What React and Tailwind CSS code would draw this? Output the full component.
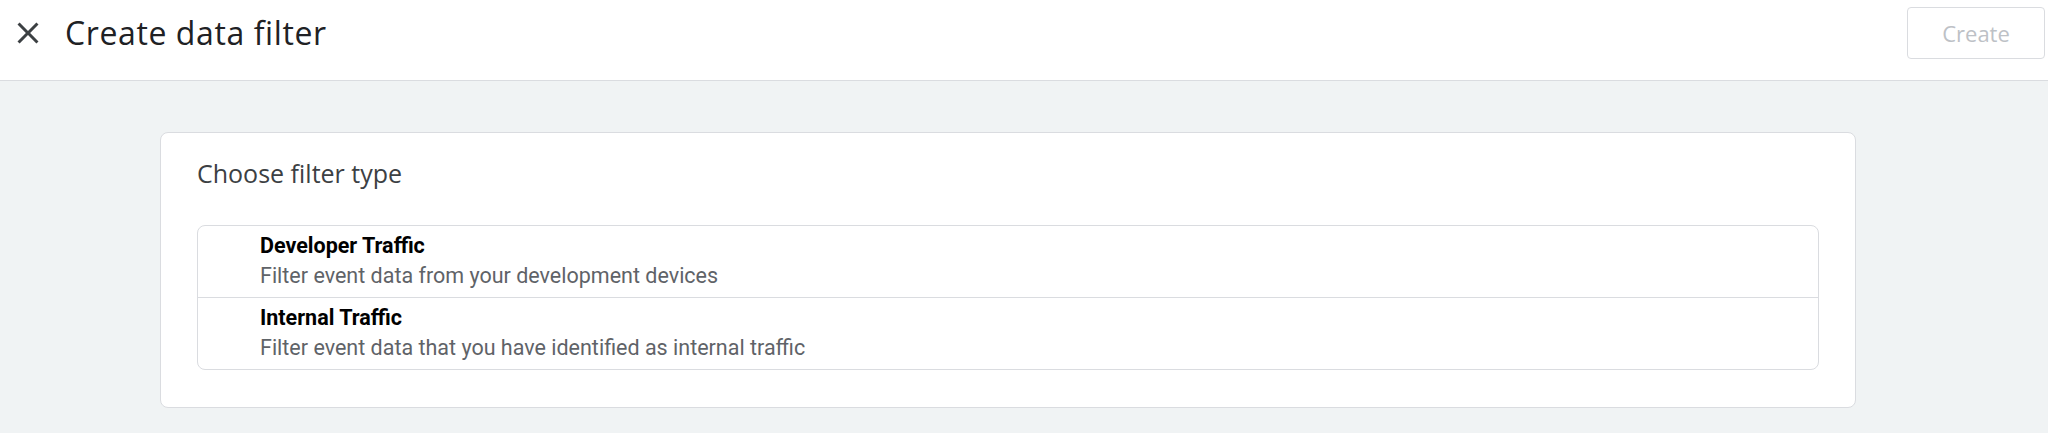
import React from 'react';

const filterTypes = [
    { id: 'developer', title: 'Developer Traffic', description: 'Filter event data from your development devices' },
    { id: 'internal', title: 'Internal Traffic', description: 'Filter event data that you have identified as internal traffic' },
];

const CloseIcon = () => (
    <svg viewBox="0 0 24 24" className="w-9 h-9" fill="#3c4043">
        <path d="M19 6.41L17.59 5 12 10.59 6.41 5 5 6.41 10.59 12 5 17.59 6.41 19 12 13.41 17.59 19 19 17.59 13.41 12z" />
    </svg>
);

const App = () => {
    return (
        <div className="min-h-screen bg-[#f0f3f4] w-full h-[433px] overflow-hidden">
            <div className="h-[81px] bg-white border-b border-[#dadce0] flex items-start justify-between">
                <div className="flex items-center h-[66px] pl-[10px]">
                    <button className="w-9 h-9 flex items-center justify-center">
                        <CloseIcon />
                    </button>
                    <h1 className="ml-[19px] text-[32px] leading-9 tracking-[0.6px] text-[#202124] font-['Open_Sans',sans-serif]">Create data filter</h1>
                </div>
                <button
                    disabled
                    className="mt-[7px] mr-[3px] w-[138px] h-[52px] rounded-[4px] border border-[#dadce0] text-[22px] text-[#bdc1c6] font-['Open_Sans',sans-serif]"
                >
                    Create
                </button>
            </div>

            <div className="ml-[160px] mt-[51px] w-[1696px] bg-white border border-[#dadce0] rounded-lg px-[36px] pt-[26px] pb-[37px]">
                <h2 className="text-[25px] leading-7 text-[#3c4043] font-['Open_Sans',sans-serif]">Choose filter type</h2>
                <div className="mt-[38px] border border-[#dadce0] rounded-lg font-['Roboto',sans-serif]">
                    {filterTypes.map((item, i) => (
                        <div
                            key={item.id}
                            className={`pl-[62px] pt-[7px] pb-[8px] ${i > 0 ? 'border-t border-[#dadce0]' : ''}`}
                        >
                            <div className="text-[21.5px] leading-[26px] font-bold text-[#000]">{item.title}</div>
                            <div className="mt-1 text-[21.5px] leading-[26px] text-[#5f6368]">{item.description}</div>
                        </div>
                    ))}
                </div>
            </div>
        </div>
    );
};

export default App;
